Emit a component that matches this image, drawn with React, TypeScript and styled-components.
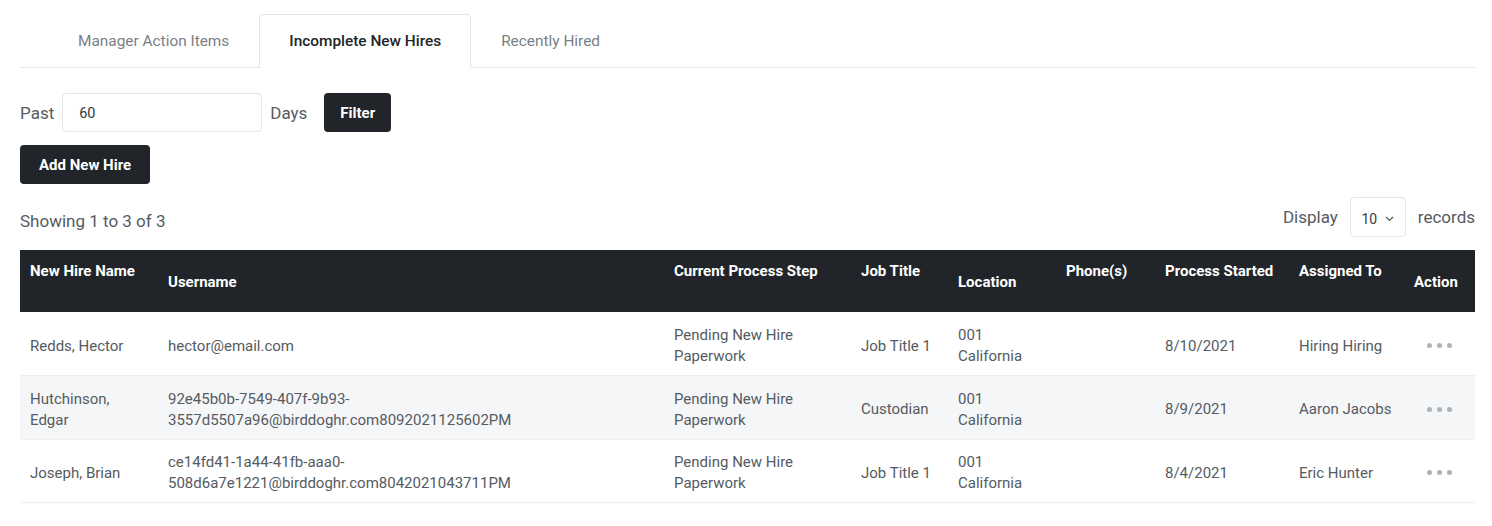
import React from "react";
import styled, { createGlobalStyle } from "styled-components";

const GlobalStyle = createGlobalStyle`
  body {
    margin: 0;
    background: #fff;
    font-family: Roboto, "Liberation Sans", sans-serif;
    color: #212529;
  }
`

const Page = styled.div`
  padding: 14px 17px 0 20px;
`

const Tabs = styled.div`
  display: flex;
  padding-left: 28px;
  border-bottom: 1px solid #e3e5e8;
`

const Tab = styled.div<{ active?: boolean }>`
  height: 52px;
  padding: 0 29px 1px;
  display: flex;
  align-items: center;
  font-size: 15.4px;
  color: ${p => p.active ? "#212529" : "#7a7f86"};
  font-weight: ${p => p.active ? 500 : 400};
  border: 1px solid ${p => p.active ? "#e3e5e8" : "transparent"};
  border-bottom: none;
  border-radius: 4px 4px 0 0;
  background: ${p => p.active ? "#fff" : "transparent"};
  margin-bottom: -1px;
`

const FilterRow = styled.div`
  display: flex;
  align-items: center;
  gap: 8px;
  margin-top: 25px;
  font-size: 17px;
  color: #555b62;
`

const Input = styled.div`
  border: 1px solid #e3e5e8;
  border-radius: 4px;
  display: flex;
  align-items: center;
  padding-left: 16px;
  box-sizing: border-box;
  width: 200px;
  height: 39px;
  font-size: 14.5px;
  color: #343a40;
  padding-top: 2px;
`

const DarkButton = styled.button<{ wide?: boolean }>`
  height: 39px;
  padding: 0 ${p => p.wide ? 19 : 16}px;
  background: #212529;
  color: #fff;
  border: none;
  border-radius: 4px;
  font-family: inherit;
  font-size: 15px;
  font-weight: 700;
`

const ButtonRow = styled.div`
  margin-top: 13px;
`

const InfoRow = styled.div`
  display: flex;
  justify-content: space-between;
  align-items: center;
  margin-top: 13px;
  font-size: 17px;
  color: #555b62;
`

const Showing = styled.span`
  padding-top: 8px;
`

const DisplayBox = styled.div`
  display: flex;
  align-items: center;
  gap: 12px;
`

const Select = styled.div`
  width: 56px;
  height: 40px;
  box-sizing: border-box;
  border: 1px solid #e3e5e8;
  border-radius: 4px;
  display: flex;
  align-items: center;
  justify-content: center;
  gap: 8px;
  font-size: 14px;
  color: #343a40;
  padding-top: 3px;
`

const Table = styled.table`
  width: 100%;
  margin-top: 13px;
  border-collapse: collapse;
  table-layout: fixed;
  font-size: 15px;
`

const Th = styled.th<{ mid?: boolean }>`
  background: #212529;
  color: #fff;
  text-align: left;
  font-weight: 700;
  font-size: 15px;
  height: 62px;
  box-sizing: border-box;
  padding: 0 10px;
  vertical-align: ${p => p.mid ? "middle" : "top"};
  padding-top: ${p => p.mid ? "2px" : "12px"};
`

const Tr = styled.tr<{ striped?: boolean }>`
  background: ${p => p.striped ? "#f5f6f8" : "#fff"};
  border-bottom: 1px solid #eceef0;
  height: 63.6px;
`

const Td = styled.td`
  padding: 5px 10px 0;
  color: #555b62;
  line-height: 21px;
  vertical-align: middle;
  word-break: break-word;
`

const Dots = styled.div`
  display: flex;
  gap: 5px;
  padding: 0 0 1px 13px;
  & > i {
    width: 5px;
    height: 5px;
    border-radius: 50%;
    background: #adb3ba;
  }
`

const cols = [138, 506, 187, 97, 108, 99, 134, 115, 71]

const headers: [string, boolean][] = [
  ["New Hire Name", false],
  ["Username", true],
  ["Current Process Step", false],
  ["Job Title", false],
  ["Location", true],
  ["Phone(s)", false],
  ["Process Started", false],
  ["Assigned To", false],
  ["Action", true],
]

const rows = [
  { name: "Redds, Hector", user: "hector@email.com", job: "Job Title 1", date: "8/10/2021", who: "Hiring Hiring" },
  { name: "Hutchinson, Edgar", user: "92e45b0b-7549-407f-9b93-3557d5507a96@birddoghr.com8092021125602PM", job: "Custodian", date: "8/9/2021", who: "Aaron Jacobs" },
  { name: "Joseph, Brian", user: "ce14fd41-1a44-41fb-aaa0-508d6a7e1221@birddoghr.com8042021043711PM", job: "Job Title 1", date: "8/4/2021", who: "Eric Hunter" },
]

const splitUser = (u: string) => {
  const at = u.indexOf("@")
  const dash = u.lastIndexOf("-", at)
  if (dash < 0) return u
  return <>{u.slice(0, dash + 1)}<br />{u.slice(dash + 1)}</>
}

export default function App() {
  return <Page>
    <GlobalStyle />
    <Tabs>
      <Tab>Manager Action Items</Tab>
      <Tab active>Incomplete New Hires</Tab>
      <Tab>Recently Hired</Tab>
    </Tabs>
    <FilterRow>
      <span>Past</span>
      <Input>60</Input>
      <span>Days</span>
      <span style={{ width: 1 }} />
      <DarkButton>Filter</DarkButton>
    </FilterRow>
    <ButtonRow>
      <DarkButton wide>Add New Hire</DarkButton>
    </ButtonRow>
    <InfoRow>
      <Showing>Showing 1 to 3 of 3</Showing>
      <DisplayBox>
        <span>Display</span>
        <Select>10
          <svg width="9" height="6" viewBox="0 0 9 6"><path d="M1 1l3.5 3.5L8 1" fill="none" stroke="#555" strokeWidth="1.2" /></svg>
        </Select>
        <span>records</span>
      </DisplayBox>
    </InfoRow>
    <Table>
      <colgroup>{cols.map((w, i) => <col key={i} style={{ width: w }} />)}</colgroup>
      <thead>
        <tr>{headers.map(([h, mid]) => <Th key={h} mid={mid}>{h}</Th>)}</tr>
      </thead>
      <tbody>
        {rows.map((r, i) => <Tr key={r.name} striped={i % 2 === 1}>
          <Td>{r.name}</Td>
          <Td>{splitUser(r.user)}</Td>
          <Td>Pending New Hire<br />Paperwork</Td>
          <Td>{r.job}</Td>
          <Td>001<br />California</Td>
          <Td></Td>
          <Td>{r.date}</Td>
          <Td>{r.who}</Td>
          <Td><Dots><i /><i /><i /></Dots></Td>
        </Tr>)}
      </tbody>
    </Table>
  </Page>
}
